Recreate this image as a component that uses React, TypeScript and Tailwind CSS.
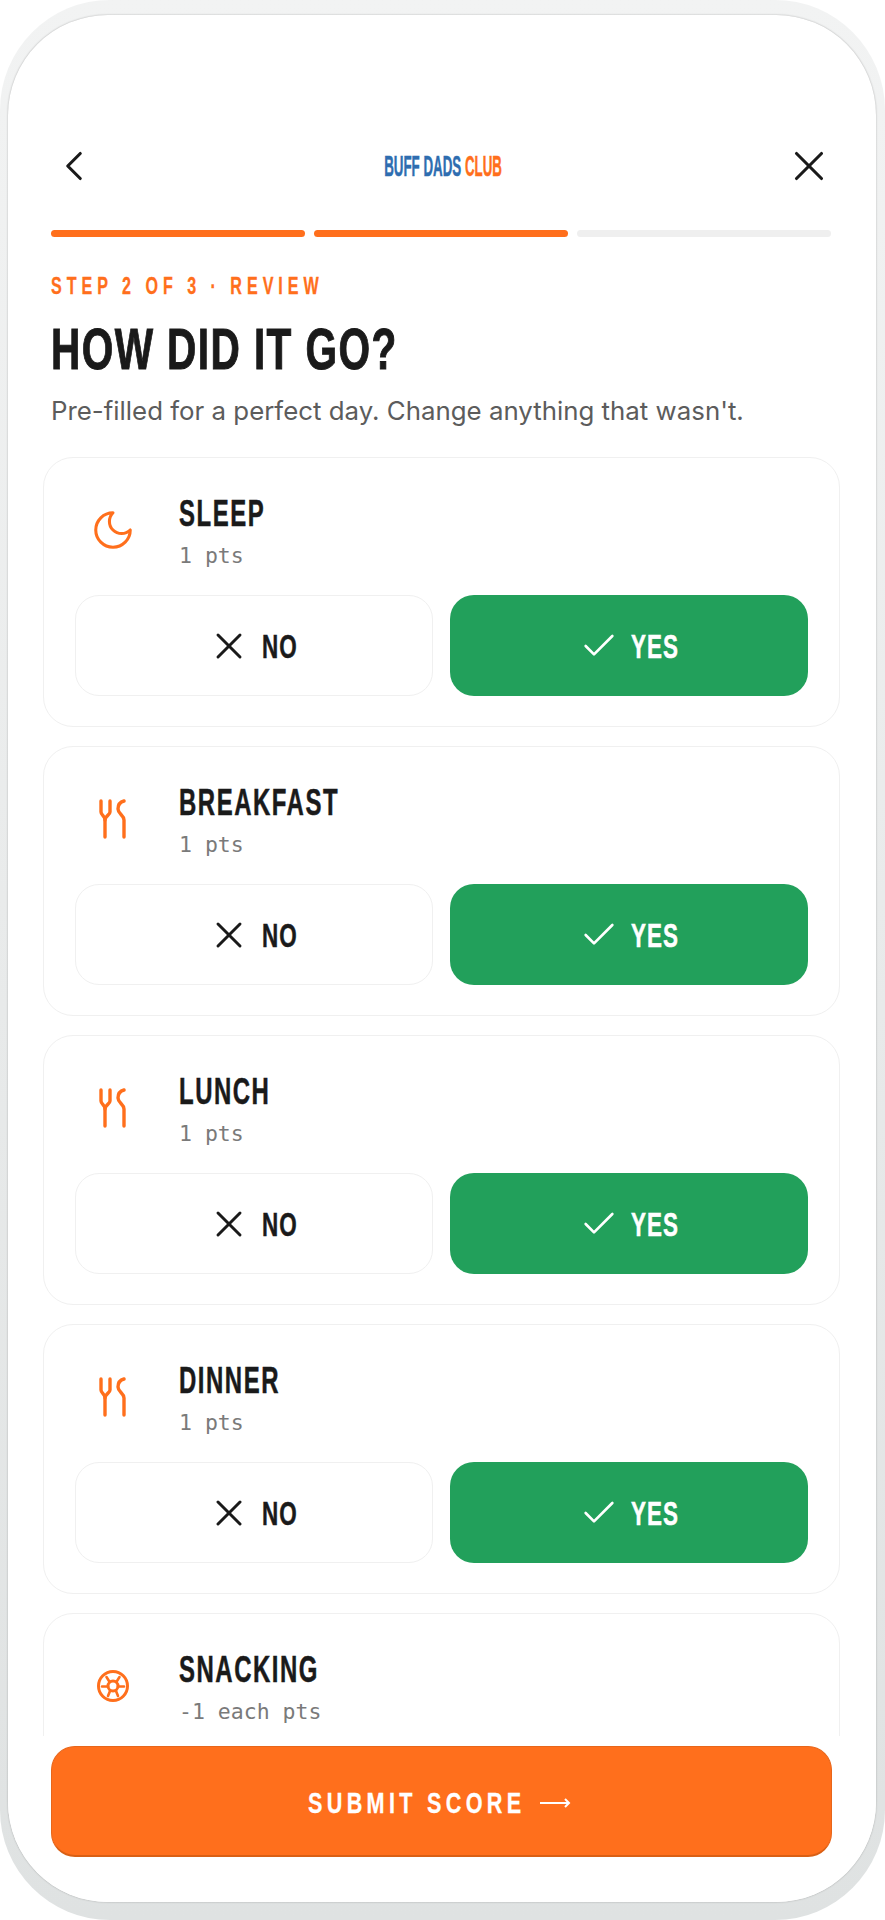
import React from "react";
import { Check, ChevronLeft, X } from "lucide-react";

const condensed = "font-['Liberation_Sans',sans-serif] font-bold";

function MoonIcon() {
  return (
    <svg width="46" height="46" viewBox="0 0 24 24" fill="none" stroke="#ff6f1c" strokeWidth="1.6" strokeLinecap="round" strokeLinejoin="round">
      <path d="M12 3a6 6 0 0 0 9 9 9 9 0 1 1-9-9Z" />
    </svg>
  );
}

function ForkIcon() {
  return (
    <svg width="28" height="40" viewBox="0 0 28 40" fill="none" stroke="#ff6f1c" strokeWidth="3.4" strokeLinecap="round" strokeLinejoin="round">
      <path d="M2 2v11c0 3 4 4 4 8v17" />
      <path d="M11 2v11c0 3-5 4-5 8" />
      <path d="M25 2c-4 1-6 4-6 8 0 5 6 6 6 11v17" />
    </svg>
  );
}

function SnackIcon() {
  return (
    <svg width="34" height="34" viewBox="0 0 34 34" fill="none" stroke="#ff6f1c" strokeWidth="3" strokeLinecap="round">
      <circle cx="17" cy="17" r="14.5" />
      <circle cx="17" cy="17" r="5" />
      <path d="M13 12l-2.500-4M21 12l2.500-4M12 17.500H6M22 17.500h6M14 22l-2 5M20 22l2 5" strokeWidth="2.600" />
    </svg>
  );
}

function ScoreCard({ title, pts, icon }: { title: string; pts: string; icon: React.ReactNode }) {
  return (
    <div className="shrink-0 rounded-[30px] border border-[#f0f0f0] bg-white px-[31px] pb-[30px] pt-[31px]">
      <div className="flex h-[106px] items-start gap-[29px]">
        <div className="flex h-[82px] w-[75px] items-center justify-center">{icon}</div>
        <div className="pt-[3px]">
          <div className={`${condensed} h-[44px] origin-left scale-x-[.665] whitespace-nowrap text-[36px] leading-[44px] tracking-[2.300px] text-[#1a1a1a] [-webkit-text-stroke:0.5px]`}>{title}</div>
          <div className="mt-[6px] font-['DejaVu_Sans_Mono',monospace] text-[21.500px] leading-[28px] text-[#7a7a7a]">{pts}</div>
        </div>
      </div>
      {title !== "SNACKING" && (
        <div className="grid grid-cols-2 gap-[17px]">
          <button className="flex h-[101px] items-center justify-center gap-[11px] rounded-[24px] border border-[#f0f0f0] bg-white pr-[5px] text-[#1a1a1a]">
            <X size={44} strokeWidth={1.6} />
            <span className={`${condensed} w-[34px] origin-left scale-x-[.66] pt-[2px] text-left text-[34px] tracking-[1.500px] [-webkit-text-stroke:0.5px]`}>NO</span>
          </button>
          <button className="flex h-[101px] items-center justify-center gap-[12px] rounded-[24px] bg-[#22a05b] pr-[2px] text-white">
            <Check size={40} strokeWidth={1.6} />
            <span className={`${condensed} w-[46px] origin-left scale-x-[.66] pt-[2px] text-left text-[34px] tracking-[1.500px] [-webkit-text-stroke:0.5px]`}>YES</span>
          </button>
        </div>
      )}
    </div>
  );
}

export default function App() {
  return (
    <div className="h-[1920px] w-[885px] overflow-hidden bg-white">
      <div className="h-[1920px] rounded-[110px] bg-linear-to-b from-[#f2f3f3] to-[#dfe2e2] pl-[8px] pr-[9px] pt-[15px]">
        <div className="relative h-[1887px] overflow-hidden rounded-[100px] bg-white pl-[35px] pr-[36px] pt-[126px] shadow-[0_0_2px_rgba(0,0,0,0.3)]">
          {/* top nav */}
          <div className="flex h-[50px] items-center justify-between pl-[8px] pr-[9px] text-[#1a1a1a]">
            <ChevronLeft size={50} strokeWidth={1.5} className="-ml-[2px]" />
            <div className="ml-[4px] flex w-[117px] justify-center">
              <span className={`${condensed} shrink-0 scale-x-[.46] whitespace-nowrap text-[29px] leading-none text-[#2e6db0] [-webkit-text-stroke:0.5px]`}>
                BUFF DADS <span className="text-[#ff6f1c]">CLUB</span>
              </span>
            </div>
            <X size={50} strokeWidth={1.5} className="-mr-[3px]" />
          </div>

          {/* progress */}
          <div className="mt-[39px] grid grid-cols-3 gap-[9px] pl-[8px] pr-[9px]">
            <div className="h-[7px] rounded-full bg-[#ff6f1c]" />
            <div className="h-[7px] rounded-full bg-[#ff6f1c]" />
            <div className="h-[7px] rounded-full bg-[#efefef]" />
          </div>

          <div className="px-[8px]">
            <div className={`${condensed} mt-[34px] origin-left scale-x-[.7] whitespace-nowrap text-[23px] leading-[30px] tracking-[7.100px] text-[#ff6f1c] [-webkit-text-stroke:0.3px]`}>
              STEP 2 OF 3 · REVIEW
            </div>
            <h1 className={`${condensed} mt-[15px] origin-left scale-x-[.7] whitespace-nowrap text-[58px] leading-[66px] tracking-[2px] text-[#1a1a1a] [-webkit-text-stroke:1px]`}>
              HOW DID IT GO?
            </h1>
            <p className="mt-[12px] whitespace-nowrap font-['Inter',sans-serif] text-[25.850px] leading-[34px] text-[#5c5c5c]">
              Pre-filled for a perfect day. Change anything that wasn't.
            </p>
          </div>

          {/* cards */}
          <div className="mt-[29px] flex flex-col gap-[19px]">
            <ScoreCard title="SLEEP" pts="1 pts" icon={<MoonIcon />} />
            <ScoreCard title="BREAKFAST" pts="1 pts" icon={<ForkIcon />} />
            <ScoreCard title="LUNCH" pts="1 pts" icon={<ForkIcon />} />
            <ScoreCard title="DINNER" pts="1 pts" icon={<ForkIcon />} />
            <ScoreCard title="SNACKING" pts="-1 each pts" icon={<SnackIcon />} />
          </div>

          {/* sticky submit */}
          <div className="absolute inset-x-0 bottom-0 bg-white pb-[45px] pl-[43px] pr-[44px] pt-[10px]">
            <button className="flex h-[111px] w-full items-center justify-center gap-[17px] rounded-[24px] border border-b-2 border-[#e8661a] border-b-[#d95f14] bg-[#ff6f1c] pr-[4px] pt-[2px] text-white">
              <span className={`${condensed} w-[215px] origin-left scale-x-[.72] whitespace-nowrap text-left text-[30px] tracking-[6px] [-webkit-text-stroke:0.3px]`}>
                SUBMIT SCORE
              </span>
              <svg width="31" height="16" viewBox="0 0 31 16" fill="none" stroke="#ffffff" strokeWidth="2">
                <path d="M0 9h29M25 5l4 4-4 4" />
              </svg>
            </button>
          </div>
        </div>
      </div>
    </div>
  );
}
